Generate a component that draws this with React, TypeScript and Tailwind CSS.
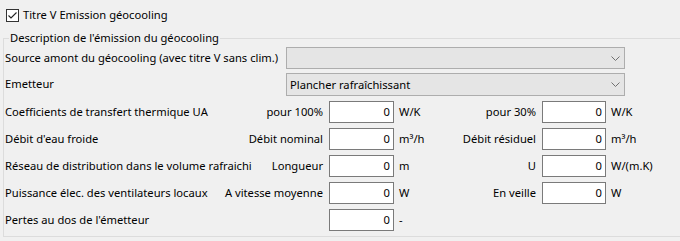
import React from "react";

const font = { fontFamily: '"Noto Sans", "Liberation Sans", sans-serif' };

function Chevron() {
  return (
    <svg width="9" height="5" viewBox="0 0 9 5" className="mr-[4px]">
      <path d="M0.5 0.5 L4.5 4.5 L8.5 0.5" fill="none" stroke="#707070" strokeWidth="1" />
    </svg>
  );
}

function Combo({ text, h }: { text?: string; h: string }) {
  return (
    <div className={`flex w-[339px] ${h} items-center justify-between border border-[#adadad] bg-[#e5e5e5]`}>
      <span className="pl-[3px] leading-none text-black">{text ?? ""}</span>
      <Chevron />
    </div>
  );
}

function Field({ w }: { w: string }) {
  return (
    <div className={`flex ${w} h-[22px] shrink-0 items-center justify-end border border-[#7a7a7a] bg-white pr-[3px] leading-none`}>
      0
    </div>
  );
}

type Row = {
  left: string;
  mid?: string;
  u1: string;
  right?: string;
  u2?: string;
};

const rows: Row[] = [
  { left: "Coefficients de transfert thermique UA", mid: "pour 100%", u1: "W/K", right: "pour 30%", u2: "W/K" },
  { left: "Débit d'eau froide", mid: "Débit nominal", u1: "m³/h", right: "Débit résiduel", u2: "m³/h" },
  { left: "Réseau de distribution dans le volume rafraichi", mid: "Longueur", u1: "m", right: "U", u2: "W/(m.K)" },
  { left: "Puissance élec. des ventilateurs locaux", mid: "A vitesse moyenne", u1: "W", right: "En veille", u2: "W" },
  { left: "Pertes au dos de l'émetteur", u1: "-" },
];

export default function App() {
  return (
    <div className="h-[241px] w-[680px] overflow-hidden bg-[#f0f0f0] text-[11.2px] text-black" style={font}>
      <div className="flex h-[30px] items-center pl-[6px]">
        <div className="flex h-[13px] w-[13px] items-center justify-center border border-[#333333] bg-white">
          <svg width="11" height="11" viewBox="0 0 11 11">
            <path d="M1.5 5.5 L4 8 L9.5 2.5" fill="none" stroke="#222" strokeWidth="1.1" />
          </svg>
        </div>
        <span className="ml-[4px] whitespace-nowrap">Titre V Emission géocooling</span>
      </div>
      <fieldset className="ml-[3px] border-t border-l border-b border-[#dcdcdc] pb-[5px] pl-[1px]">
        <legend className="ml-[4px] px-[1px] leading-[16px]">Description de l'émission du géocooling</legend>
        <div className="mt-[1px] flex h-[22px] items-center">
          <span className="w-[281px] shrink-0 whitespace-nowrap">Source amont du géocooling (avec titre V sans clim.)</span>
          <Combo h="h-[22px]" />
        </div>
        <div className="mt-[4px] flex h-[23px] items-center">
          <span className="w-[281px] shrink-0 whitespace-nowrap">Emetteur</span>
          <Combo h="h-[23px]" text="Plancher rafraîchissant" />
        </div>
        <div className="mt-[5px] flex flex-col gap-[5px]">
          {rows.map((r, i) => (
            <div key={i} className="flex h-[22px] items-center">
              <div className="flex w-[318px] shrink-0 justify-between whitespace-nowrap">
                <span>{r.left}</span>
                <span>{r.mid ?? ""}</span>
              </div>
              <div className="ml-[6px]">
                <Field w="w-[65px]" />
              </div>
              <div className="flex w-[142px] shrink-0 justify-between whitespace-nowrap pl-[5px]">
                <span>{r.u1}</span>
                <span>{r.right ?? ""}</span>
              </div>
              {r.right !== undefined && (
                <>
                  <div className="ml-[6px]">
                    <Field w="w-[64px]" />
                  </div>
                  <span className="whitespace-nowrap pl-[5px]">{r.u2}</span>
                </>
              )}
            </div>
          ))}
        </div>
      </fieldset>
    </div>
  );
}
